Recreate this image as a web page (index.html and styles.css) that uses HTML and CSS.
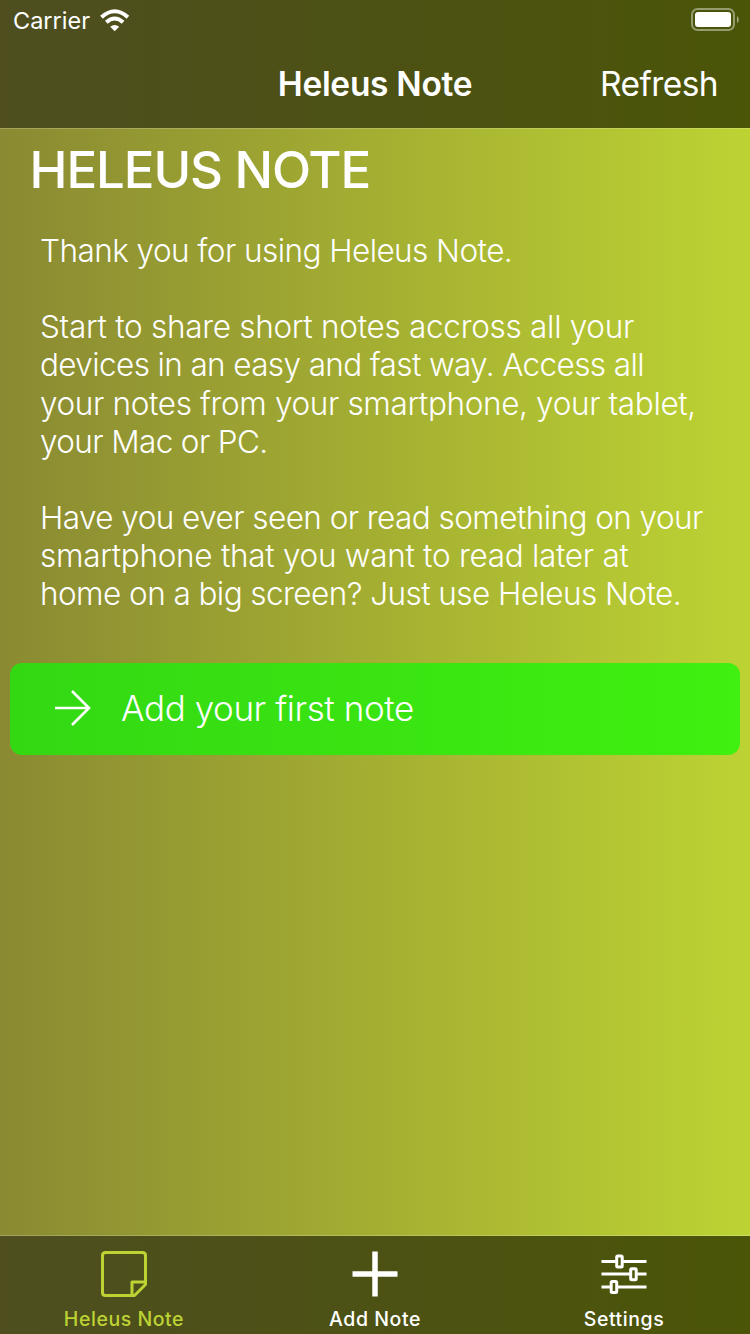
FILE: index.html
```html
<!DOCTYPE html>
<html lang="en">
<head>
<meta charset="utf-8">
<title>Heleus Note</title>
<link rel="stylesheet" href="styles.css">
</head>
<body>
<div class="screen">
  <header class="top">
    <div class="status">
      <span class="carrier">Carrier</span>
      <svg class="wifi" width="30" height="23" viewBox="0 0 30 23" fill="none" stroke="#fff" stroke-width="4">
        <path d="M1.5 8.2Q14.7-3.7 27.9 8.2"/>
        <path d="M6.3 13.2Q14.7 5.8 23.1 13.2"/>
        <path d="M14.7 22.2 10.2 17.7Q14.7 14.2 19.2 17.7Z" fill="#fff" stroke="none"/>
      </svg>
      <svg class="battery" width="48" height="23" viewBox="0 0 48 23">
        <rect x="1" y="1" width="42" height="21" rx="5.5" fill="none" stroke="#fff" stroke-opacity=".42" stroke-width="2"/>
        <rect x="4" y="4" width="36" height="15" rx="3" fill="#fff"/>
        <path d="M46 8Q47.7 9 47.7 11.5T46 15Z" fill="#fff" fill-opacity=".5"/>
      </svg>
    </div>
    <nav class="navbar">
      <span class="title">Heleus Note</span>
      <span class="refresh">Refresh</span>
    </nav>
  </header>
  <main class="content">
    <h1 class="heading">HELEUS NOTE</h1>
    <p class="text"><span class="line tight">Thank you for using Heleus Note.</span></p>
    <p class="text"><span class="line loose">Start to share short notes accross all your</span><span class="line tighter">devices in an easy and fast way. Access all</span><span class="line medium">your notes from your smartphone, your tablet,</span><span class="line tighter">your Mac or PC.</span></p>
    <p class="text"><span class="line tight">Have you ever seen or read something on your</span><span class="line loose">smartphone that you want to read later at</span><span class="line tight">home on a big screen? Just use Heleus Note.</span></p>
    <div class="button">
      <svg class="arrow" width="36" height="36" viewBox="0 0 36 36" fill="none" stroke="#fff" stroke-width="2.6"><path d="M0 18H34M17 1 34 18 17 35"/></svg>
      <span class="label">Add your first note</span>
    </div>
  </main>
  <footer class="tabs">
    <div class="tab active">
      <svg width="46" height="46" viewBox="0 0 46 46" fill="none" stroke="currentColor" stroke-width="3" stroke-linejoin="round"><path d="M4.5 1.5H41.5Q44.5 1.5 44.5 4.5V33.5L33.5 44.5H4.5Q1.5 44.5 1.5 41.5V4.5Q1.5 1.5 4.5 1.5ZM44.5 31H31V44.5"/></svg>
      <span>Heleus Note</span>
    </div>
    <div class="tab">
      <svg width="46" height="46" viewBox="0 0 46 46" fill="none" stroke="currentColor" stroke-width="5.5"><path d="M.5 23H45.5M23 .5V45.5"/></svg>
      <span>Add Note</span>
    </div>
    <div class="tab">
      <svg width="46" height="46" viewBox="0 0 46 46" fill="none" stroke="currentColor" stroke-width="3"><path d="M.5 10.5H15M22 10.5H45.5M.5 23H29M36 23H45.5M.5 36H9M17 36H45.5"/><rect x="15.7" y="5" width="5.5" height="11" rx="1"/><rect x="29.7" y="17.7" width="5.5" height="11" rx="1"/><rect x="10.2" y="30.5" width="5.5" height="11" rx="1"/></svg>
      <span>Settings</span>
    </div>
  </footer>
</div>
</body>
</html>
```
FILE: styles.css
```css
* { box-sizing: border-box; }
body { margin: 0; font-family: Inter, "Liberation Sans", sans-serif; color: #fff; }
svg { display: block; flex: none; }
.screen { width: 750px; height: 1334px; display: flex; flex-direction: column; overflow: hidden; background: linear-gradient(90deg, #8a8a32, #a5b032 52%, #bdd333); white-space: nowrap; }
.top { height: 129px; flex: none; background: linear-gradient(90deg, #4e4e20, #4b5508); background-clip: padding-box; border-bottom: 1px solid rgba(255,255,255,.2); }
.status { height: 39px; display: flex; align-items: center; padding: 0 11px 0 13px; }
.carrier { font-size: 23.5px; line-height: 40px; width: 78px; padding-top: 3px; }
.wifi { margin: 1px 0 0 9px; }
.battery { margin-left: auto; }
.navbar { height: 89px; display: grid; grid-template-columns: 1fr auto 1fr; align-items: center; padding: 1px 32px 0; }
.title { grid-column: 2; font-size: 33.5px; font-weight: 600; letter-spacing: -.3px; }
.refresh { justify-self: end; font-size: 33.5px; letter-spacing: -.6px; }
.content { flex: 1; padding: 0 10px; }
.heading { margin: 10px 0 31px 19.5px; font-size: 51px; line-height: 62px; font-weight: 500; letter-spacing: -1.1px; }
.text { margin: 0 0 38px 30px; font-size: 31.5px; line-height: 38.2px; font-weight: 300; }
.line { display: block; }
.loose { letter-spacing: -.29px; }
.medium { letter-spacing: -.36px; }
.tight { letter-spacing: -.56px; }
.tighter { letter-spacing: -.62px; }
.button { height: 92px; margin-top: 49px; border-radius: 12px; display: flex; align-items: center; padding: 0 0 2px 45px; background: linear-gradient(90deg, #33d813, #40f010); }
.label { margin-left: 30px; font-size: 35px; font-weight: 300; letter-spacing: -.42px; }
.tabs { height: 99px; flex: none; display: grid; grid-template-columns: 248px 254px 244px; padding-top: 15px; background: linear-gradient(90deg, #4e4e20, #4b5508); background-clip: padding-box; border-top: 1px solid rgba(255,255,255,.2); }
.tab { display: flex; flex-direction: column; align-items: center; gap: 9px; font-size: 19.5px; line-height: 26px; font-weight: 500; letter-spacing: .55px; }
.active { color: #bdd333; }
```
